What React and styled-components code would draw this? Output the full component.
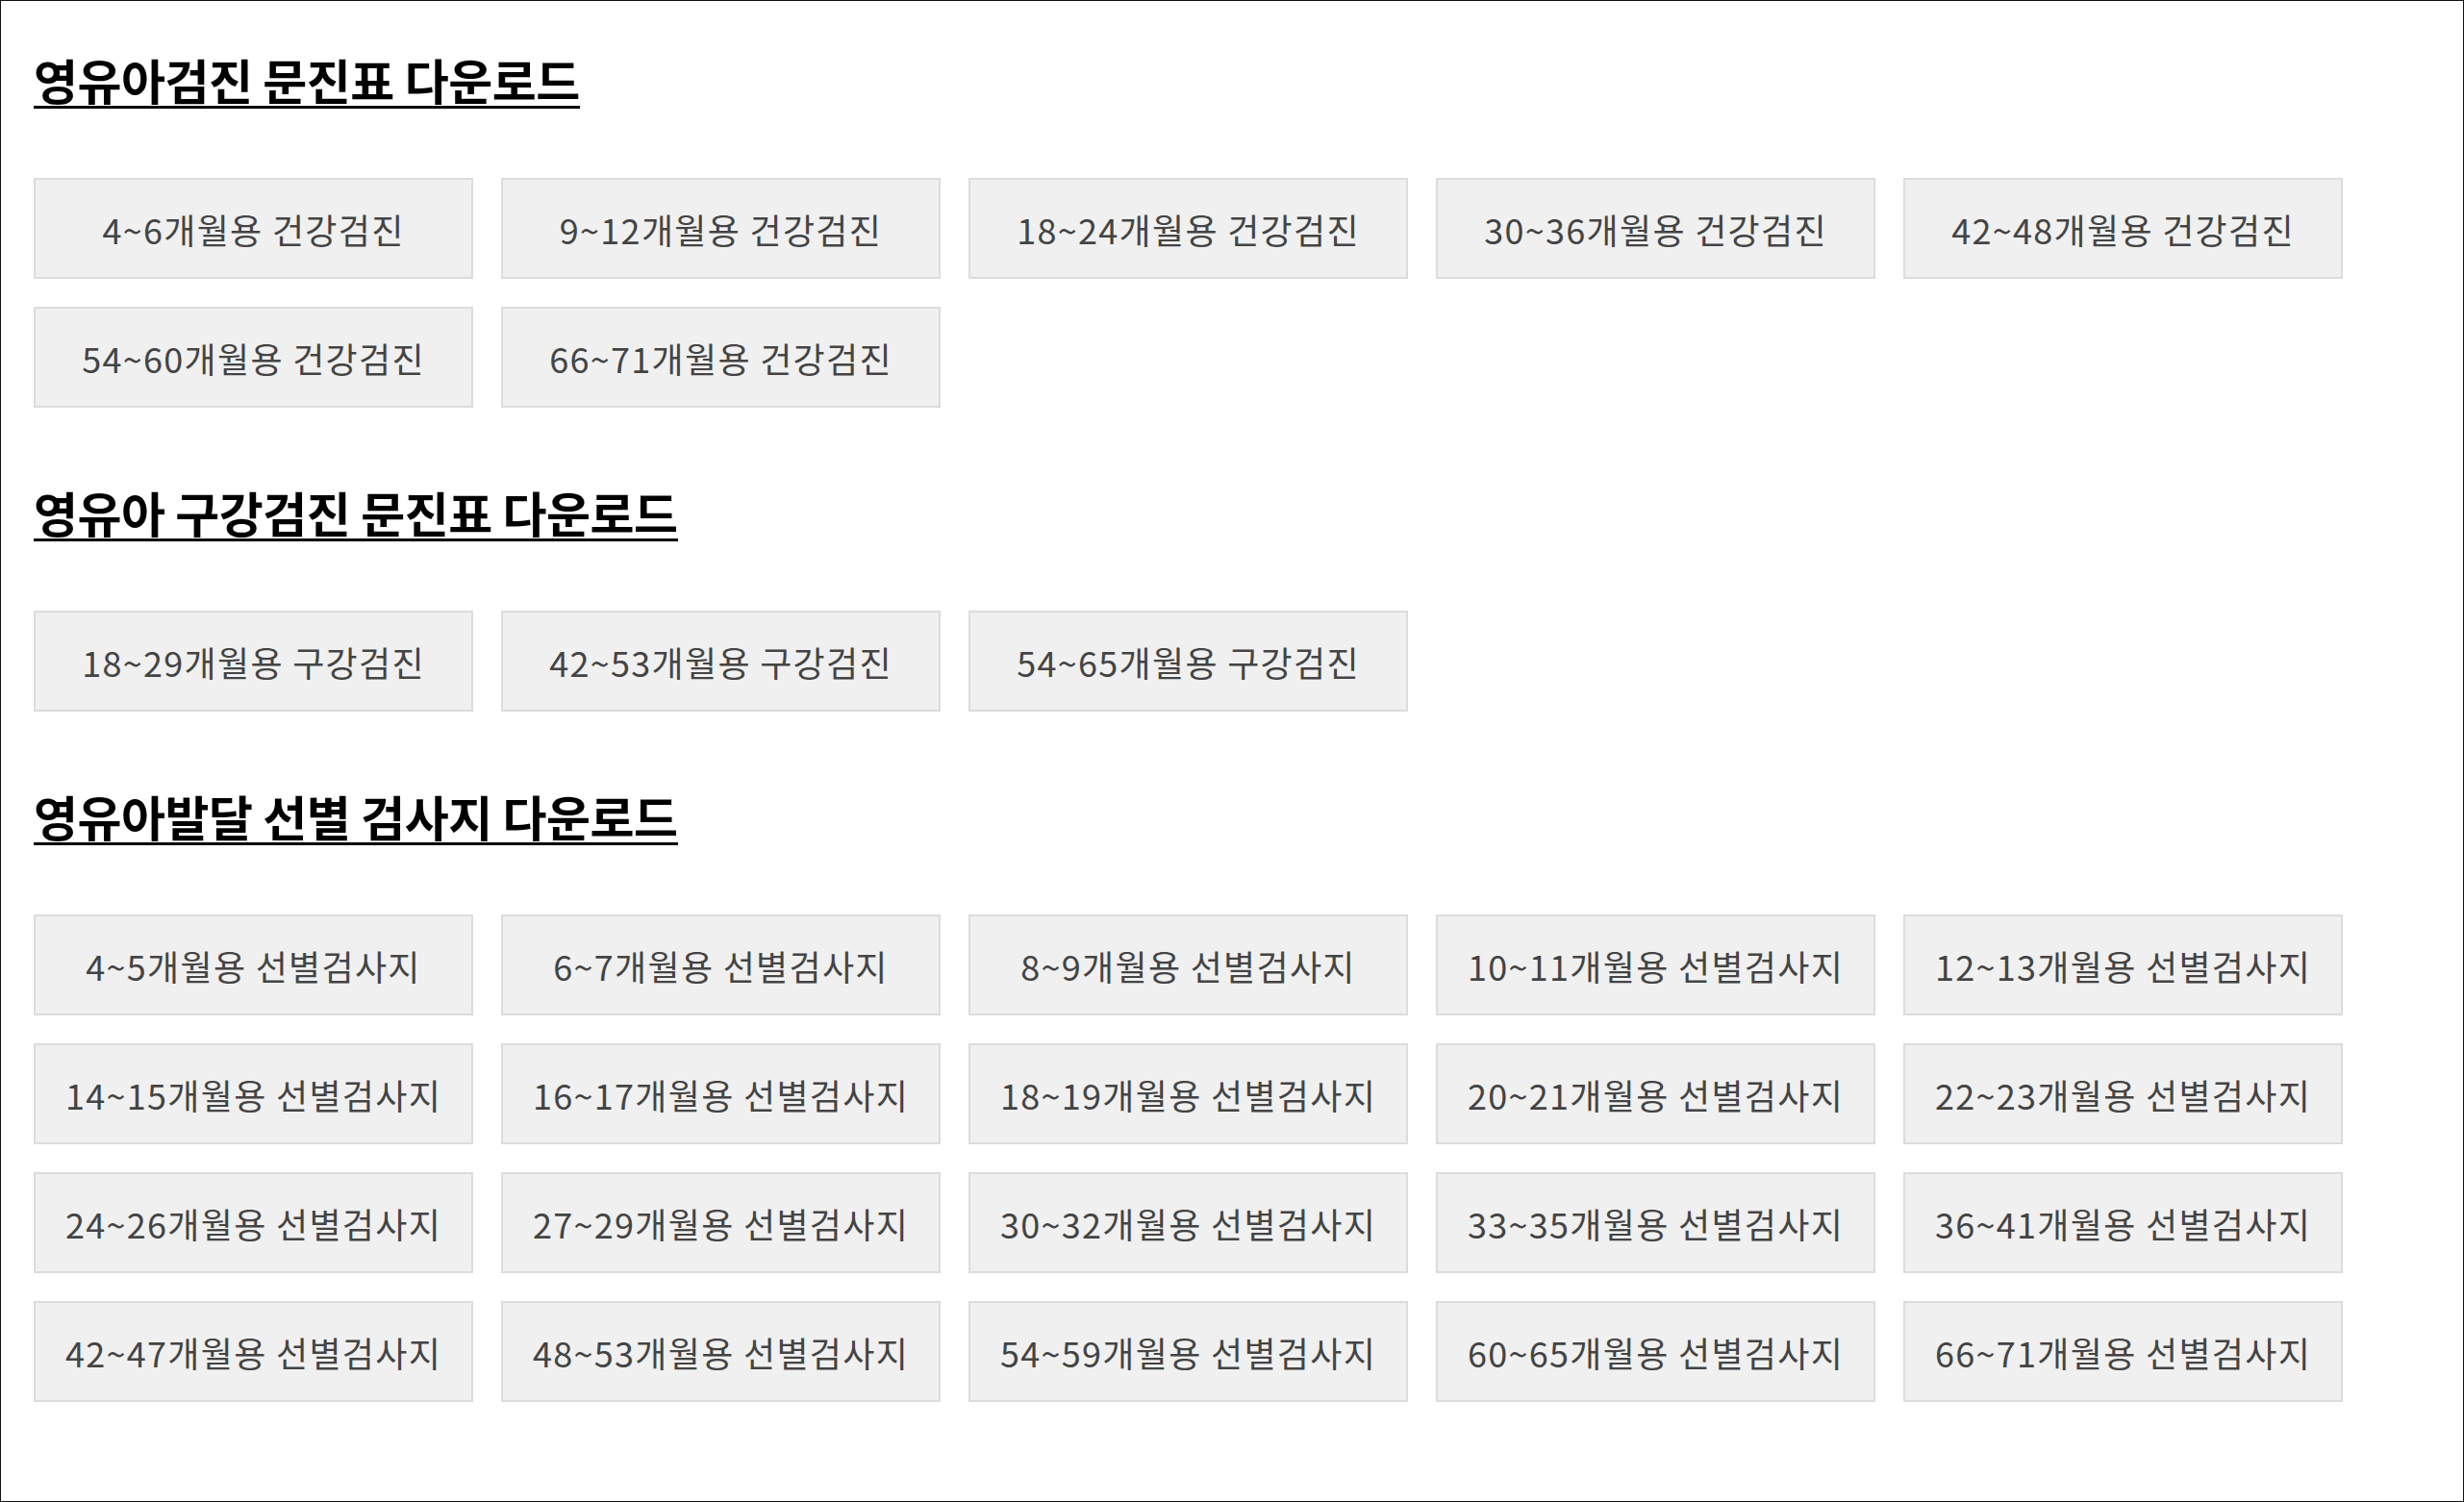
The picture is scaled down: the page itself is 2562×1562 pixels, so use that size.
import React from "react";
import styled, { createGlobalStyle } from "styled-components";

const GlobalStyle = createGlobalStyle`
  html, body {
    margin: 0;
    padding: 0;
    background: #ffffff;
  }
  body {
    font-family: "Noto Sans CJK KR", "Noto Sans", sans-serif;
  }
  * { box-sizing: border-box; }
`;

const Page = styled.div`
  width: 2562px;
  height: 1562px;
  border: 1px solid #111;
  padding: 56px 34px 0;
  display: flex;
  flex-direction: column;
  gap: 83px;
`;

const Section = styled.section`
  display: flex;
  flex-direction: column;
  align-items: flex-start;
`;

const Title = styled.h2`
  margin: 0 0 72px;
  display: inline-block;
  font-family: "Noto Sans CJK KR", sans-serif;
  font-weight: 700;
  font-size: 50px;
  line-height: 50px;
  letter-spacing: -0.5px;
  color: #000;
  padding-bottom: 3px;
  border-bottom: 3px solid #000;
`;

const Grid = styled.div`
  display: grid;
  grid-template-columns: repeat(5, 457px);
  column-gap: 29px;
  row-gap: 29px;
`;

const DownloadButton = styled.a`
  display: flex;
  align-items: center;
  justify-content: center;
  height: 105px;
  background: #f0f0f0;
  border: 2px solid #dcdcdc;
  color: #444;
  font-family: "Noto Sans CJK KR", sans-serif;
  font-size: 36px;
  font-weight: 400;
  letter-spacing: 1.3px;
  text-decoration: none;
  cursor: pointer;
  white-space: nowrap;
`;

const sections = [
  {
    title: "영유아검진 문진표 다운로드",
    items: [
      "4~6개월용 건강검진",
      "9~12개월용 건강검진",
      "18~24개월용 건강검진",
      "30~36개월용 건강검진",
      "42~48개월용 건강검진",
      "54~60개월용 건강검진",
      "66~71개월용 건강검진",
    ],
  },
  {
    title: "영유아 구강검진 문진표 다운로드",
    items: ["18~29개월용 구강검진", "42~53개월용 구강검진", "54~65개월용 구강검진"],
  },
  {
    title: "영유아발달 선별 검사지 다운로드",
    items: [
      "4~5개월용 선별검사지",
      "6~7개월용 선별검사지",
      "8~9개월용 선별검사지",
      "10~11개월용 선별검사지",
      "12~13개월용 선별검사지",
      "14~15개월용 선별검사지",
      "16~17개월용 선별검사지",
      "18~19개월용 선별검사지",
      "20~21개월용 선별검사지",
      "22~23개월용 선별검사지",
      "24~26개월용 선별검사지",
      "27~29개월용 선별검사지",
      "30~32개월용 선별검사지",
      "33~35개월용 선별검사지",
      "36~41개월용 선별검사지",
      "42~47개월용 선별검사지",
      "48~53개월용 선별검사지",
      "54~59개월용 선별검사지",
      "60~65개월용 선별검사지",
      "66~71개월용 선별검사지",
    ],
  },
];

export default function App() {
  return (
    <>
      <GlobalStyle />
      <Page>
        {sections.map((s) => (
          <Section key={s.title}>
            <Title>{s.title}</Title>
            <Grid>
              {s.items.map((item) => (
                <DownloadButton key={item}>{item}</DownloadButton>
              ))}
            </Grid>
          </Section>
        ))}
      </Page>
    </>
  );
}
